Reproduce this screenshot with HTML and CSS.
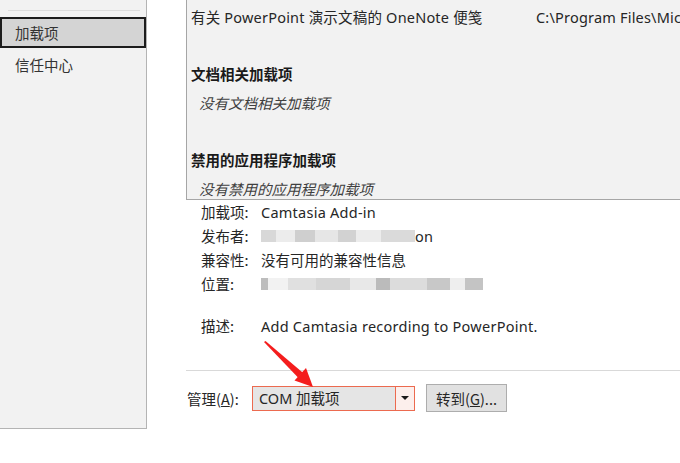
FILE: index.html
```html
<!DOCTYPE html>
<html lang="zh">
<head>
<meta charset="utf-8">
<link rel="stylesheet" href="styles.css">
</head>
<body>
<div class="app">
  <aside class="sidebar">
    <div class="side-sep"></div>
    <div class="side-item selected">加载项</div>
    <div class="side-item">信任中心</div>
  </aside>
  <main class="main">
    <div class="list">
      <div class="row"><span class="name">有关 PowerPoint 演示文稿的 OneNote 便笺</span><span class="loc">C:\Program Files\Mic</span></div>
      <div class="row"></div>
      <div class="row group">文档相关加载项</div>
      <div class="row empty">没有文档相关加载项</div>
      <div class="row"></div>
      <div class="row group">禁用的应用程序加载项</div>
      <div class="row empty">没有禁用的应用程序加载项</div>
    </div>
    <div class="details">
      <div class="drow"><span class="dlabel">加载项:</span><span class="dval latin">Camtasia Add-in</span></div>
      <div class="drow"><span class="dlabel">发布者:</span><span class="dval"><span class="blur blur-pub"></span><span class="latin">on</span></span></div>
      <div class="drow"><span class="dlabel">兼容性:</span><span class="dval">没有可用的兼容性信息</span></div>
      <div class="drow"><span class="dlabel">位置:</span><span class="dval"><span class="blur blur-loc"></span></span></div>
      <div class="drow desc"><span class="dlabel">描述:</span><span class="dval latin">Add Camtasia recording to PowerPoint.</span></div>
    </div>
    <div class="sep"></div>
    <div class="manage">
      <span class="mlabel">管理(<u>A</u>):</span>
      <div class="select">
        <span class="select-text">COM 加载项</span>
        <span class="select-btn"><span class="caret"></span></span>
      </div>
      <button class="go">转到(<u>G</u>)...</button>
    </div>
  </main>
</div>
<svg class="arrow" width="680" height="463" viewBox="0 0 680 463">
  <polygon points="264,342 265.5,341 302.6,372.6 298,377.6" fill="#f41d1d"/>
  <polygon points="313,387 294.5,380.5 306,368" fill="#f41d1d"/>
</svg>
</body>
</html>
```
FILE: styles.css
```css
html, body {
  margin: 0;
  padding: 0;
  background: #ffffff;
}
body {
  width: 680px;
  height: 463px;
  overflow: hidden;
  position: relative;
  font-family: "Noto Sans", "Noto Sans CJK SC", sans-serif;
  font-size: 14.5px;
  color: #262626;
}
.latin {
  letter-spacing: 0.25px;
}
.app {
  display: flex;
  align-items: flex-start;
}
.sidebar {
  width: 146px;
  height: 418px;
  flex: none;
  background: #f2f2f2;
  border-right: 1px solid #b4b4b4;
  border-bottom: 1px solid #b4b4b4;
  padding-top: 10px;
  box-sizing: content-box;
}
.side-sep {
  height: 1px;
  margin: 0 6px 0 8px;
  background: #dcdcdc;
}
.side-item {
  height: 31px;
  line-height: 31px;
  padding-left: 15px;
  font-family: "Noto Sans CJK SC", sans-serif;
  font-size: 14.5px;
  color: #333;
}
.side-item.selected {
  margin-top: 6px;
  height: 27px;
  line-height: 27px;
  padding-left: 13px;
  background: #d4d4d4;
  border: 2px solid #1c1c1c;
}
.side-item + .side-item {
  margin-top: 1px;
}
.main {
  margin-left: 39px;
  width: 560px;
  flex: none;
  overflow: hidden;
}
.list {
  height: 200px;
  background: #f2f2f2;
  border-left: 1px solid #a6a6a6;
  border-bottom: 1px solid #a6a6a6;
  padding-top: 3px;
  box-sizing: border-box;
  overflow: hidden;
}
.row {
  height: 28.7px;
  line-height: 28.7px;
  padding-left: 4px;
  white-space: nowrap;
  display: flex;
}
.name {
  width: 345px;
  flex: none;
  letter-spacing: 0.2px;
}
.loc {
  letter-spacing: 0.2px;
}
.group {
  font-weight: bold;
  font-family: "Noto Sans CJK SC", sans-serif;
  color: #1a1a1a;
}
.empty {
  font-style: italic;
  padding-left: 12px;
  font-family: "Noto Sans CJK SC", sans-serif;
  color: #404040;
}
.details {
  padding-left: 15px;
}
.drow {
  height: 24px;
  line-height: 24px;
  display: flex;
  white-space: nowrap;
}
.drow.desc {
  margin-top: 18px;
}
.dlabel {
  width: 60px;
  flex: none;
  font-family: "Noto Sans CJK SC", sans-serif;
}
.dval {
  display: flex;
  align-items: center;
}
.blur {
  display: inline-block;
  height: 12px;
  background: linear-gradient(90deg, #d8d8d8 0 10%, #ececec 10% 22%, #cfcfcf 22% 35%, #e6e6e6 35% 50%, #d2d2d2 50% 62%, #ececec 62% 78%, #dadada 78% 100%);
}
.blur-pub {
  width: 154px;
}
.blur-loc {
  width: 222px;
  background: linear-gradient(90deg, #bdbdbd 0 3%, #f2f2f2 3% 12%, #e0e0e0 12% 25%, #d6d6d6 25% 40%, #e8e8e8 40% 52%, #bbbbbb 52% 58%, #dcdcdc 58% 75%, #c8c8c8 75% 85%, #eeeeee 85% 92%, #c4c4c4 92% 100%);
}
.sep {
  margin-top: 32px;
  height: 1px;
  background: #d9d9d9;
}
.manage {
  display: flex;
  align-items: center;
  margin-top: 13px;
  height: 28px;
  padding-left: 1px;
}
.mlabel {
  width: 65px;
  flex: none;
  font-family: "Noto Sans CJK SC", sans-serif;
}
.select {
  width: 163px;
  height: 25px;
  box-sizing: border-box;
  border: 1px solid #ec6a4f;
  background: #e5e5e5;
  display: flex;
  align-items: stretch;
}
.select-text {
  flex: 1;
  line-height: 23px;
  padding-left: 6px;
}
.select-btn {
  width: 18px;
  border-left: 1px solid #ec6a4f;
  background: #fcefec;
  display: flex;
  align-items: center;
  justify-content: center;
}
.caret {
  width: 0;
  height: 0;
  border-left: 4px solid transparent;
  border-right: 4px solid transparent;
  border-top: 4px solid #1a1a1a;
}
.go {
  margin-left: 11px;
  width: 81px;
  height: 28px;
  background: #e1e1e1;
  border: 1px solid #adadad;
  font-family: "Noto Sans CJK SC", sans-serif;
  font-size: 14.5px;
  color: #262626;
  padding: 0;
}
.arrow {
  position: absolute;
  left: 0;
  top: 0;
  pointer-events: none;
}
```
